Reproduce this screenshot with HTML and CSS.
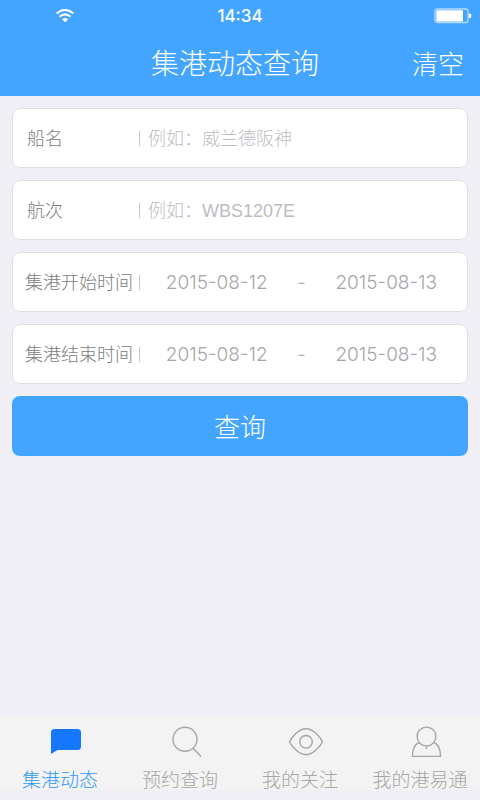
FILE: index.html
```html
<!DOCTYPE html>
<html lang="zh-CN">
<head>
<meta charset="utf-8">
<meta name="viewport" content="width=device-width, initial-scale=1">
<title>集港动态查询</title>
<link rel="stylesheet" href="styles.css">
</head>
<body>
<header class="header">
  <div class="status">
    <svg class="wifi" viewBox="0 0 18 14" aria-hidden="true">
      <path d="M.7 4.500Q9-2.800 17.300 4.500M3.500 7.800Q9 3 14.500 7.800" fill="none" stroke="#fff" stroke-width="2"/>
      <path d="M5.900 10.200Q9 7.600 12.100 10.200L9 13.200Z" fill="#fff"/>
    </svg>
    <time class="clock">14:34</time>
    <svg class="battery" viewBox="0 0 38 16" aria-hidden="true">
      <rect x="1" y="1" width="33" height="13.5" rx="2" fill="none" stroke="#b4dbff" stroke-width="1.3"/>
      <rect x="2.3" y="2.2" width="26.7" height="11.2" rx="1" fill="#fff"/>
      <path d="M35 5.2Q37.4 5.2 37.4 7.7T35 10.3Z" fill="#fff"/>
    </svg>
  </div>
  <div class="titlebar">
    <h1 class="title">集港动态查询</h1>
    <button class="clear" type="reset" form="search">清空</button>
  </div>
</header>
<main class="main">
  <form class="form" id="search">
    <div class="field">
      <label class="label inset" for="ship">船名</label>
      <input class="input" id="ship" type="text" placeholder="例如：威兰德阪神">
    </div>
    <div class="field">
      <label class="label inset" for="voyage">航次</label>
      <input class="input" id="voyage" type="text" placeholder="例如：WBS1207E">
    </div>
    <div class="field">
      <label class="label" for="start-from">集港开始时间</label>
      <div class="range">
        <input class="date" id="start-from" type="text" value="2015-08-12">
        <span class="dash">-</span>
        <input class="date" type="text" value="2015-08-13" aria-label="集港开始时间">
      </div>
    </div>
    <div class="field">
      <label class="label" for="end-from">集港结束时间</label>
      <div class="range">
        <input class="date" id="end-from" type="text" value="2015-08-12">
        <span class="dash">-</span>
        <input class="date" type="text" value="2015-08-13" aria-label="集港结束时间">
      </div>
    </div>
    <button class="submit" type="submit">查询</button>
  </form>
</main>
<nav class="tabs">
  <a class="tab active" href="#">
    <svg class="icon" viewBox="0 0 36 32" aria-hidden="true"><path d="M6.5 2h23a3.5 3.5 0 0 1 3.5 3.5v14a3.5 3.5 0 0 1-3.5 3.5H9.5L3 27V5.500a3.500 3.500 0 0 1 3.500-3.500Z" fill="#1677ff"/></svg>
    <span>集港动态</span>
  </a>
  <a class="tab" href="#">
    <svg class="icon line" viewBox="0 0 36 32" aria-hidden="true"><circle cx="17" cy="12.200" r="12"/><path d="M25 21l8 8.500"/></svg>
    <span>预约查询</span>
  </a>
  <a class="tab" href="#">
    <svg class="icon line" viewBox="0 0 36 32" aria-hidden="true"><path d="M1.500 15Q3.200 11 7.500 6.800Q18-3.200 28.500 6.800Q32.800 11 34.500 15Q32.800 18.500 28.500 22.500Q18 32.800 7.500 22.500Q3.200 18.500 1.500 15Z"/><circle cx="18" cy="14.800" r="6.300"/></svg>
    <span>我的关注</span>
  </a>
  <a class="tab" href="#">
    <svg class="icon line" viewBox="0 0 36 32" aria-hidden="true"><circle cx="18.500" cy="9.500" r="9.400"/><path d="M11 15.500C6.500 17.500 4.500 22 4.500 29.400H32.500C32.500 22 30.500 17.500 26 15.500M18.500 19v3"/></svg>
    <span>我的港易通</span>
  </a>
</nav>
</body>
</html>
```
FILE: styles.css
```css
* {
  box-sizing: border-box;
}

body {
  display: flex;
  flex-direction: column;
  min-height: 100vh;
  margin: 0;
  padding-bottom: 10px;
  background: #efeff5;
  color: #7d7d7d;
  font-family: "Liberation Sans", "Noto Sans CJK SC", sans-serif;
  font-weight: 300;
}

button,
input {
  margin: 0;
  padding: 0;
  border: 0;
  background: none;
  color: inherit;
  font: inherit;
}

.header {
  background: #43a5ff;
  color: #fff;
}

.status,
.titlebar {
  display: grid;
  grid-template-columns: 1fr auto 1fr;
  align-items: center;
}

.status {
  height: 32px;
  padding: 0 8px 0 56px;
  grid-template-columns: 18px 1fr 38px;
}

.wifi {
  width: 18px;
  height: 14px;
}

.clock {
  padding-right: 28px;
  font: 500 17px/32px Inter, sans-serif;
  text-align: center;
}

.battery {
  width: 38px;
  height: 16px;
}

.titlebar {
  height: 64px;
  padding: 2px 16px 0 6px;
}

.title {
  grid-column: 2;
  margin: 0;
  font-size: 28px;
  font-weight: 300;
  line-height: 40px;
}

.clear {
  justify-self: end;
  font-size: 26px;
  line-height: 40px;
}

.main {
  flex: 1;
  padding: 12px;
}

.form {
  display: flex;
  flex-direction: column;
  gap: 12px;
}

.field {
  display: flex;
  align-items: center;
  height: 60px;
  padding: 2px 12px 0;
  border: 1px solid #dedee4;
  border-radius: 8px;
  background: #fff;
  font-size: 18px;
}

.label {
  display: flex;
  align-items: center;
  flex: none;
  width: 115px;
  line-height: 28px;
}

.label::after {
  width: 1px;
  height: 15px;
  margin: 0 0 2px auto;
  background: #c8c8cc;
  content: "";
}

.inset {
  padding-left: 2px;
}

.input {
  flex: 1;
  min-width: 0;
  height: 28px;
  margin-left: 8px;
}

.input::placeholder {
  color: #bcbcc2;
  opacity: 1;
}

.range {
  display: grid;
  grid-template-columns: 1fr 48px 1fr;
  flex: 1;
  align-items: center;
  padding: 0 8px 0 16px;
  color: #a6a6aa;
  font-family: Inter, "Liberation Sans", sans-serif;
  font-size: 19px;
  line-height: 28px;
  text-align: center;
}

.date {
  width: 100%;
  min-width: 0;
  height: 28px;
  text-align: center;
}

.submit {
  height: 60px;
  padding-bottom: 2px;
  border-radius: 8px;
  background: #43a5ff;
  color: #fff;
  font-size: 26px;
}

.tabs {
  display: grid;
  grid-template-columns: repeat(4, 1fr);
  height: 75px;
  padding-top: 12px;
  background: #f3f3f3;
}

.tab {
  display: flex;
  flex-direction: column;
  align-items: center;
  gap: 8px;
  color: #a6a6a6;
  font-size: 19px;
  line-height: 28px;
  text-decoration: none;
  white-space: nowrap;
}

.active {
  color: #2f98fb;
}

.icon {
  width: 36px;
  height: 32px;
  margin-left: 12px;
  overflow: visible;
}

.line {
  fill: none;
  stroke: #a6a6a6;
  stroke-width: 1.4;
}
```
